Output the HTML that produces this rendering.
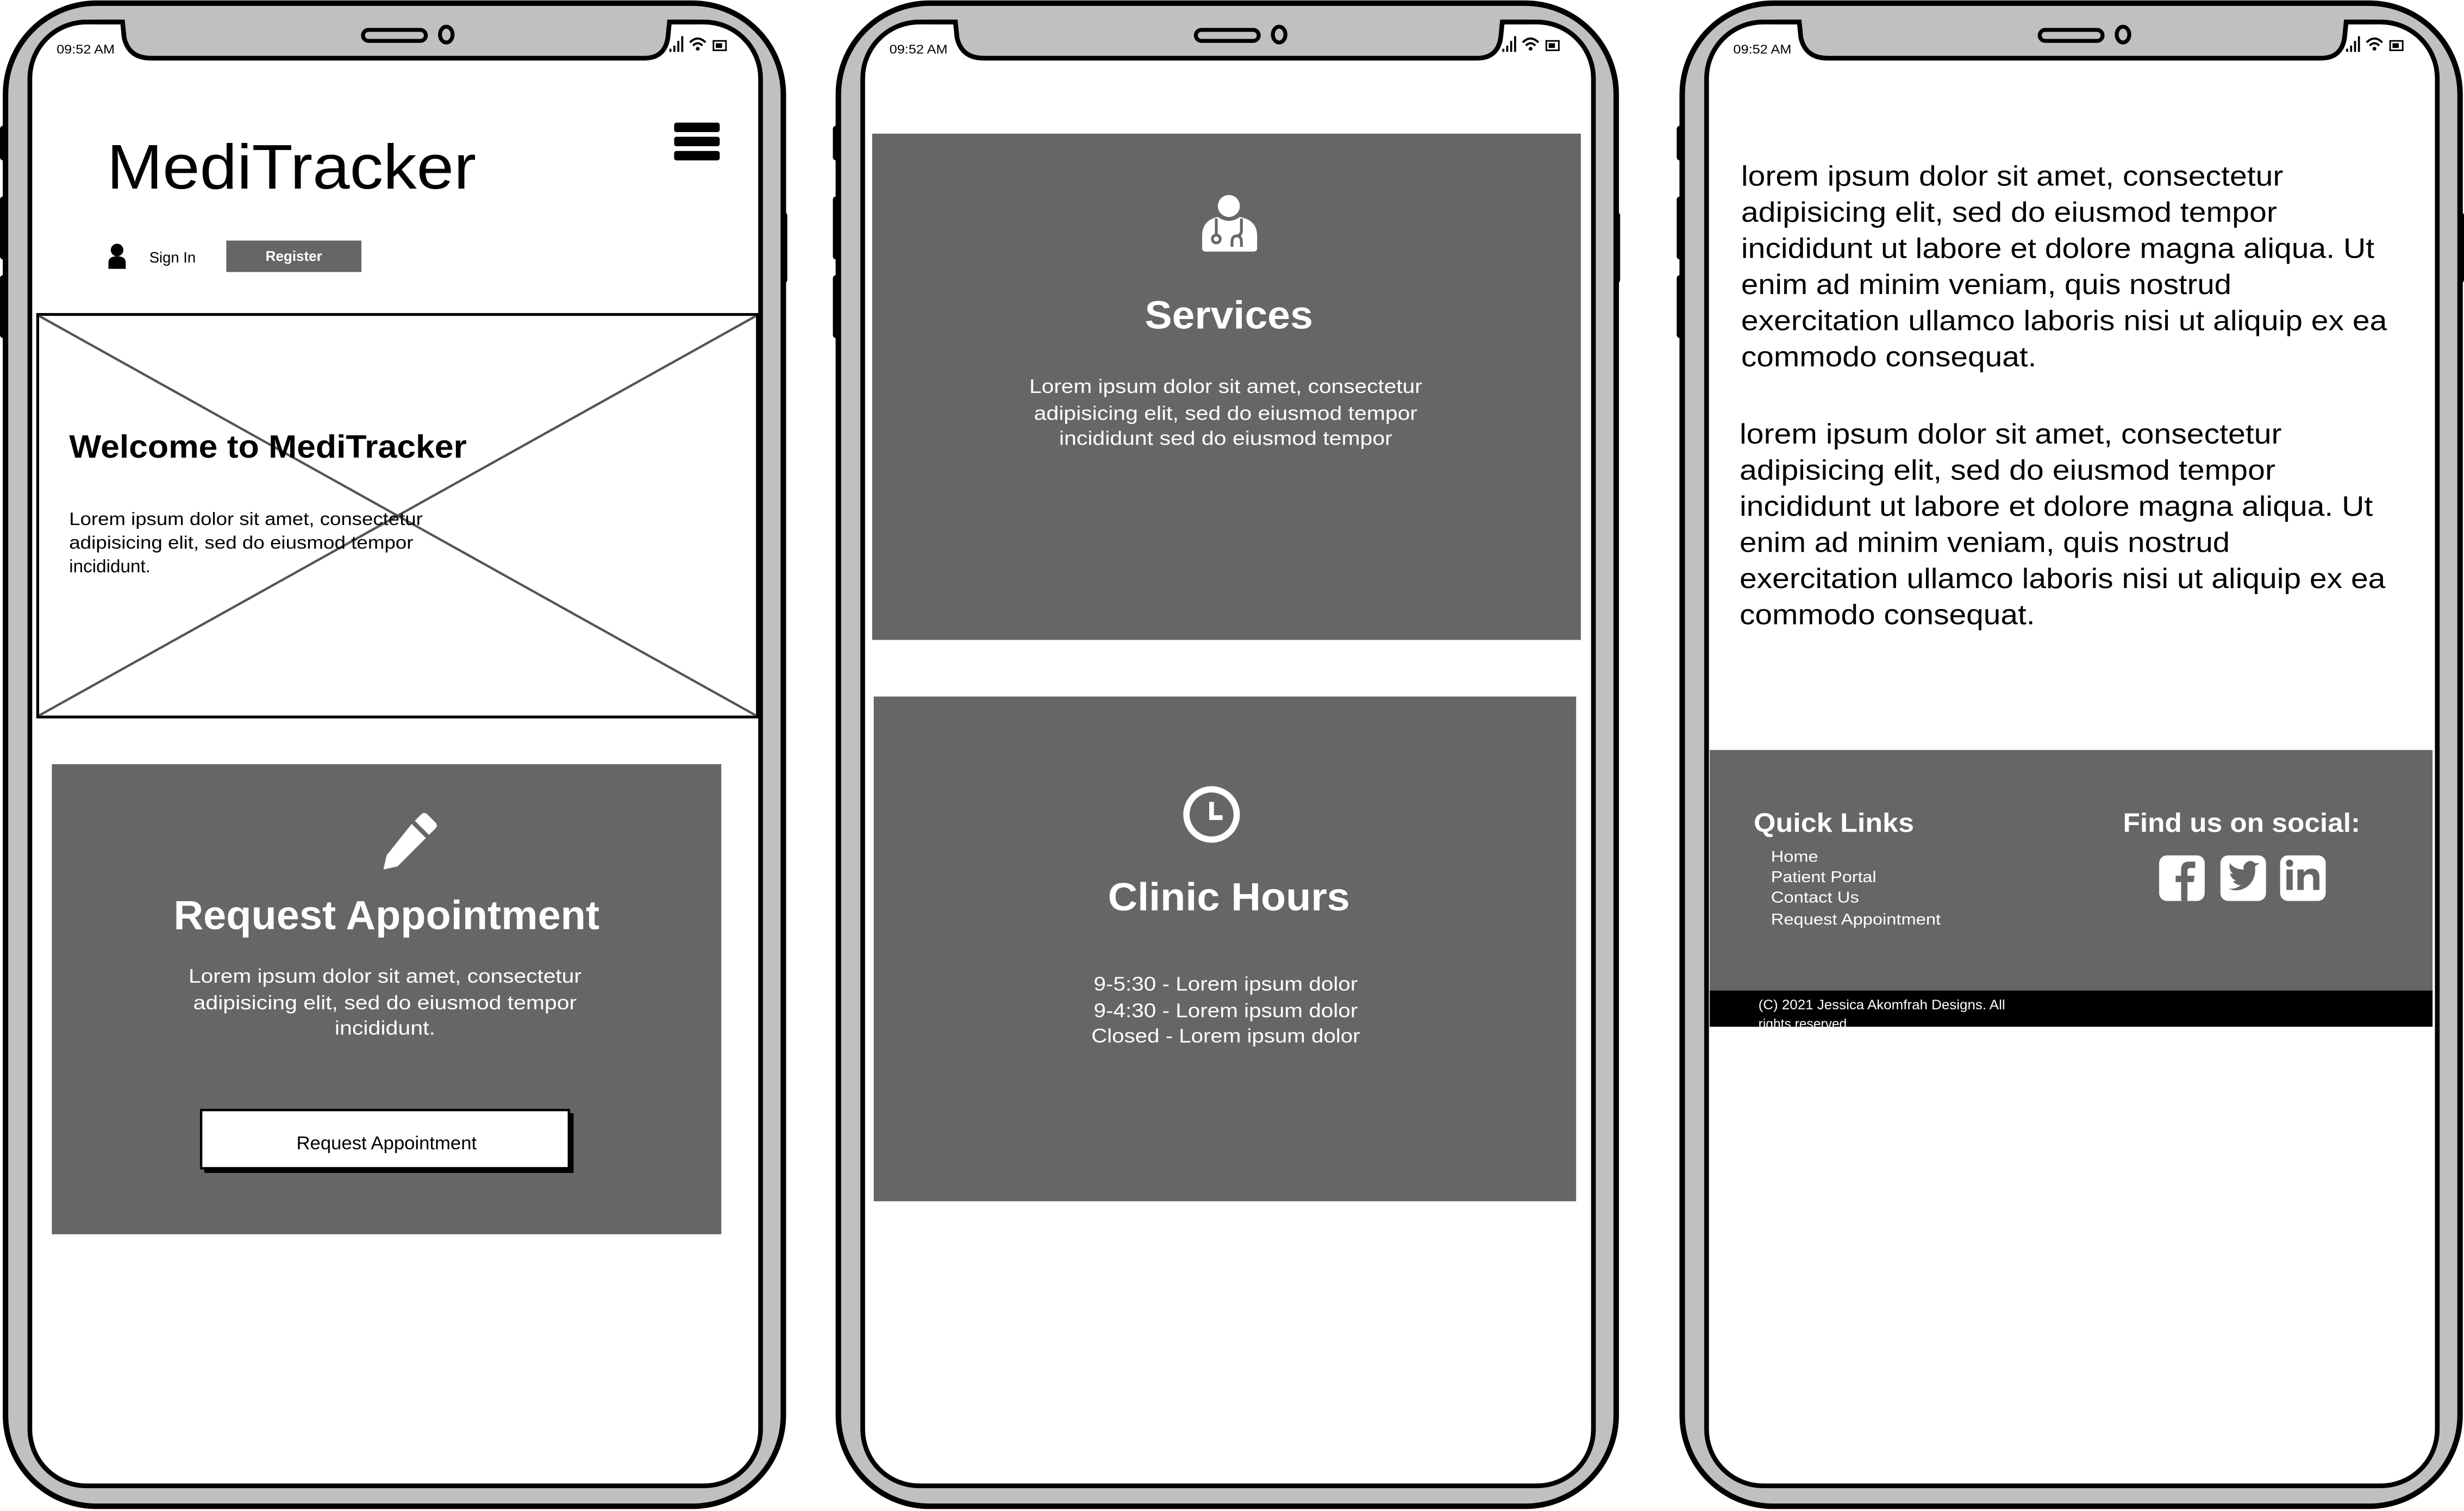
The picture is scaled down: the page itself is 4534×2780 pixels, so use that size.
<!DOCTYPE html>
<html><head><meta charset="utf-8"><style>html,body{margin:0;padding:0;background:#fff;overflow:hidden}svg{display:block}</style></head>
<body>
<svg xmlns="http://www.w3.org/2000/svg" width="4534" height="2780" viewBox="0 0 1568 961" preserveAspectRatio="none" font-family="Liberation Sans, sans-serif">
<defs>
<g id="phone">
  <rect x="-2" y="80" width="6" height="22" fill="#000" rx="2"/>
  <rect x="-2" y="125" width="6" height="40" fill="#000" rx="2"/>
  <rect x="-2" y="175" width="6" height="40" fill="#000" rx="2"/>
  <rect x="493" y="135" width="6" height="45" fill="#000" rx="2"/>
  <rect x="1.5" y="2" width="495" height="956" rx="58" fill="#c0c0c0" stroke="#000" stroke-width="3.5"/>
  <rect x="17" y="14" width="465" height="931" rx="36" fill="#fff" stroke="#000" stroke-width="3"/>
  <path d="M76,11 L76,22 Q78,37 94,37 L408,37 Q422,37 424,22 L424,11 Z" fill="#c0c0c0"/>
  <path d="M60,14 L76,14 L77,24 Q80,37 94,37 L408,37 Q421,37 423,24 L424,14 L440,14" fill="none" stroke="#000" stroke-width="3"/>
  <rect x="229" y="19" width="40" height="7" rx="3.5" fill="none" stroke="#000" stroke-width="2.5"/>
  <ellipse cx="282" cy="22" rx="4" ry="5" fill="none" stroke="#000" stroke-width="2.5"/>
  <text x="34" y="34" font-size="8" fill="#000" textLength="37" lengthAdjust="spacingAndGlyphs">09:52 AM</text>
  <rect x="424" y="31" width="1.3" height="2" fill="#000"/><rect x="426.5" y="29" width="1.3" height="4" fill="#000"/><rect x="429" y="26" width="1.3" height="7" fill="#000"/><rect x="431.5" y="23" width="1.3" height="10" fill="#000"/>
  <path d="M437,27 Q442,22 447,27 M439,29 Q442,26 445,29" stroke="#000" stroke-width="1.3" fill="none"/><circle cx="442" cy="31" r="1.2" fill="#000"/>
  <rect x="452" y="26" width="8" height="6" fill="none" stroke="#000" stroke-width="1"/><rect x="453.5" y="27.5" width="4" height="3" fill="#000"/>
</g>
</defs>

<!-- Phone 1 -->
<use href="#phone" x="2" y="0"/>
<text x="68" y="120" font-size="40" fill="#000" textLength="235" lengthAdjust="spacingAndGlyphs">MediTracker</text>
<rect x="429" y="78" width="29" height="6" rx="1.5" fill="#000"/>
<rect x="429" y="87" width="29" height="6" rx="1.5" fill="#000"/>
<rect x="429" y="96" width="29" height="6" rx="1.5" fill="#000"/>
<circle cx="74.5" cy="159" r="4" fill="#000"/>
<path d="M69,171 L69,167 Q69,163 74.5,163 Q80,163 80,167 L80,171 Z" fill="#000"/>
<text x="95" y="167" font-size="9.5" fill="#000">Sign In</text>
<rect x="144" y="153" width="86" height="20" fill="#666"/>
<text x="187" y="166" font-size="9" font-weight="bold" fill="#fff" text-anchor="middle">Register</text>
<rect x="24" y="200" width="458" height="256" fill="#fff" stroke="#000" stroke-width="1.8"/>
<path d="M25,201 L481,455 M481,201 L25,455" stroke="#555" stroke-width="1.5"/>
<text x="44" y="291" font-size="20.5" font-weight="bold" fill="#000" textLength="253" lengthAdjust="spacingAndGlyphs">Welcome to MediTracker</text>
<g font-size="11.5" fill="#000">
<text x="44" y="334" textLength="225" lengthAdjust="spacingAndGlyphs">Lorem ipsum dolor sit amet, consectetur</text>
<text x="44" y="349" textLength="219" lengthAdjust="spacingAndGlyphs">adipisicing elit, sed do eiusmod tempor</text>
<text x="44" y="364">incididunt.</text>
</g>
<rect x="33" y="486" width="426" height="299" fill="#666"/>
<g transform="translate(243,514)" fill="#fff">
  <path d="M29,4 L34,9 Q36,11 34,13 L30,17 L21,8 L25,4 Q27,2 29,4 Z"/>
  <path d="M19,10 L28,19 L10,37 L1,39 L3,30 Z"/>
</g>
<text x="246" y="591" font-size="26" font-weight="bold" fill="#fff" text-anchor="middle" textLength="271" lengthAdjust="spacingAndGlyphs">Request Appointment</text>
<g font-size="12.5" fill="#fff" text-anchor="middle">
<text x="245" y="625" textLength="250" lengthAdjust="spacingAndGlyphs">Lorem ipsum dolor sit amet, consectetur</text>
<text x="245" y="642" textLength="244" lengthAdjust="spacingAndGlyphs">adipisicing elit, sed do eiusmod tempor</text>
<text x="245" y="658" textLength="64" lengthAdjust="spacingAndGlyphs">incididunt.</text>
</g>
<rect x="130" y="708" width="235" height="38" fill="#000"/>
<rect x="128" y="706" width="234" height="37" fill="#fff" stroke="#000" stroke-width="1.5"/>
<text x="246" y="731" font-size="12" fill="#000" text-anchor="middle">Request Appointment</text>

<!-- Phone 2 -->
<use href="#phone" x="532" y="0"/>
<rect x="555" y="85" width="451" height="322" fill="#666"/>
<g fill="#fff">
  <circle cx="782" cy="131" r="7"/>
  <path d="M765,158 L765,150 Q765,140 775,138 Q782,143 789,138 Q800,140 800,150 L800,158 Q800,160 797,160 L768,160 Q765,160 765,158 Z"/>
</g>
<g fill="none" stroke="#666" stroke-width="1.8"><path d="M774,139 L774,150 M790,139 L790,146 Q790,150 787,150 Q784,150 784,154 L784,157 M787,150 Q790,150 790,154 L790,157"/><circle cx="774" cy="152" r="2.5"/></g>
<text x="782" y="209" font-size="25" font-weight="bold" fill="#fff" text-anchor="middle" textLength="107" lengthAdjust="spacingAndGlyphs">Services</text>
<g font-size="12.5" fill="#fff" text-anchor="middle">
<text x="780" y="250" textLength="250" lengthAdjust="spacingAndGlyphs">Lorem ipsum dolor sit amet, consectetur</text>
<text x="780" y="267" textLength="244" lengthAdjust="spacingAndGlyphs">adipisicing elit, sed do eiusmod tempor</text>
<text x="780" y="283" textLength="212" lengthAdjust="spacingAndGlyphs">incididunt sed do eiusmod tempor</text>
</g>
<rect x="556" y="443" width="447" height="321" fill="#666"/>
<circle cx="771" cy="518" r="16" fill="none" stroke="#fff" stroke-width="4"/>
<path d="M771,510 L771,520 L778,520" fill="none" stroke="#fff" stroke-width="3"/>
<text x="782" y="579" font-size="25" font-weight="bold" fill="#fff" text-anchor="middle" textLength="154" lengthAdjust="spacingAndGlyphs">Clinic Hours</text>
<g font-size="12.5" fill="#fff" text-anchor="middle">
<text x="780" y="630" textLength="168" lengthAdjust="spacingAndGlyphs">9-5:30 - Lorem ipsum dolor</text>
<text x="780" y="647" textLength="168" lengthAdjust="spacingAndGlyphs">9-4:30 - Lorem ipsum dolor</text>
<text x="780" y="663" textLength="171" lengthAdjust="spacingAndGlyphs">Closed - Lorem ipsum dolor</text>
</g>

<!-- Phone 3 -->
<use href="#phone" x="1069" y="0"/>
<g font-size="18" fill="#000">
<text x="1108" y="118" textLength="345" lengthAdjust="spacingAndGlyphs">lorem ipsum dolor sit amet, consectetur</text>
<text x="1108" y="141" textLength="341" lengthAdjust="spacingAndGlyphs">adipisicing elit, sed do eiusmod tempor</text>
<text x="1108" y="164" textLength="403" lengthAdjust="spacingAndGlyphs">incididunt ut labore et dolore magna aliqua. Ut</text>
<text x="1108" y="187" textLength="312" lengthAdjust="spacingAndGlyphs">enim ad minim veniam, quis nostrud</text>
<text x="1108" y="210" textLength="411" lengthAdjust="spacingAndGlyphs">exercitation ullamco laboris nisi ut aliquip ex ea</text>
<text x="1108" y="233" textLength="188" lengthAdjust="spacingAndGlyphs">commodo consequat.</text>
<text x="1107" y="282" textLength="345" lengthAdjust="spacingAndGlyphs">lorem ipsum dolor sit amet, consectetur</text>
<text x="1107" y="305" textLength="341" lengthAdjust="spacingAndGlyphs">adipisicing elit, sed do eiusmod tempor</text>
<text x="1107" y="328" textLength="403" lengthAdjust="spacingAndGlyphs">incididunt ut labore et dolore magna aliqua. Ut</text>
<text x="1107" y="351" textLength="312" lengthAdjust="spacingAndGlyphs">enim ad minim veniam, quis nostrud</text>
<text x="1107" y="374" textLength="411" lengthAdjust="spacingAndGlyphs">exercitation ullamco laboris nisi ut aliquip ex ea</text>
<text x="1107" y="397" textLength="188" lengthAdjust="spacingAndGlyphs">commodo consequat.</text>
</g>
<rect x="1088" y="477" width="460" height="154" fill="#666"/>
<rect x="1088" y="630" width="460" height="23" fill="#000"/>
<text x="1116" y="529" font-size="17" font-weight="bold" fill="#fff" textLength="102" lengthAdjust="spacingAndGlyphs">Quick Links</text>
<g font-size="10" fill="#fff">
<text x="1127" y="548" textLength="30" lengthAdjust="spacingAndGlyphs">Home</text>
<text x="1127" y="561" textLength="67" lengthAdjust="spacingAndGlyphs">Patient Portal</text>
<text x="1127" y="574" textLength="56" lengthAdjust="spacingAndGlyphs">Contact Us</text>
<text x="1127" y="588" textLength="108" lengthAdjust="spacingAndGlyphs">Request Appointment</text>
</g>
<text x="1351" y="529" font-size="17" font-weight="bold" fill="#fff" textLength="151" lengthAdjust="spacingAndGlyphs">Find us on social:</text>
<rect x="1374" y="544" width="29" height="29" rx="5" fill="#fff"/>
<path d="M1392,573 L1392,561 L1396,561 L1396.5,557 L1392,557 L1392,554 Q1392,552 1394,552 L1397,552 L1397,548 L1393,548 Q1388,548 1388,553 L1388,557 L1384.5,557 L1384.5,561 L1388,561 L1388,573 Z" fill="#666"/>
<rect x="1413" y="544" width="29" height="29" rx="5" fill="#fff"/>
<path d="M1418,565 Q1424,568 1430,564 Q1436,559 1435,551 L1438,549 L1435,549 Q1432,546 1429,549 Q1427,551 1428,553 Q1422,553 1419,549 Q1418,553 1421,556 L1419,555.5 Q1420,559 1423,560 L1421,560.5 Q1423,563 1426,563 Q1422,566 1418,565 Z" fill="#666"/>
<rect x="1451" y="544" width="29" height="29" rx="5" fill="#fff"/>
<rect x="1455" y="553" width="4" height="13" fill="#666"/>
<circle cx="1457" cy="549" r="2.3" fill="#666"/>
<path d="M1462,566 L1462,553 L1466,553 L1466,555 Q1468,552.5 1471,552.5 Q1476,552.5 1476,558 L1476,566 L1472,566 L1472,559 Q1472,556 1469.5,556 Q1466,556 1466,559.5 L1466,566 Z" fill="#666"/>
<text x="1119" y="642" font-size="8.5" fill="#fff" textLength="157" lengthAdjust="spacingAndGlyphs">(C) 2021 Jessica Akomfrah Designs. All</text>
<clipPath id="fc"><rect x="1088" y="630" width="460" height="23"/></clipPath>
<text x="1119" y="654" font-size="8.5" fill="#fff" clip-path="url(#fc)">rights reserved</text>
</svg>
</body></html>
